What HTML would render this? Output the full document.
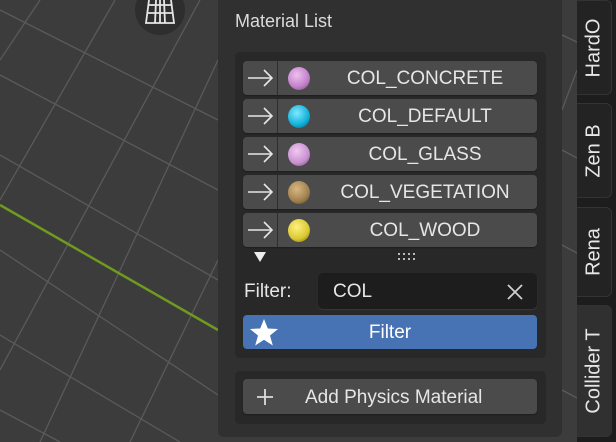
<!DOCTYPE html>
<html><head><style>
*{margin:0;padding:0;box-sizing:border-box}
body{width:616px;height:442px;overflow:hidden;background:#3c3c3c;font-family:"Liberation Sans",sans-serif;position:relative;color:#e6e6e6}
.abs{position:absolute}
.panel{left:218px;top:0;width:344px;height:437px;background:#303030;border-radius:0 0 6px 6px}
.box{left:235px;width:311px;background:#282828;border-radius:5px}
.row{left:243px;width:294px;height:34px;background:#4b4b4b;border-radius:4px;box-shadow:0 1px 1px #1e1e1e}
.row .arr{position:absolute;left:0;top:0;width:35px;height:34px;border-right:1px solid #2d2d2d}
.row .ball{position:absolute;left:45px;top:6px;width:22px;height:23px;border-radius:50%}
.row .t{position:absolute;left:70px;right:0;top:1px;line-height:34px;text-align:center;font-size:19px;color:#e6e6e6}
.tab{left:577px;width:35px;background:#232323;border-radius:0 6px 6px 0;border:1px solid #333;border-left:none;overflow:hidden}
.tab span{position:absolute;left:50%;top:50%;transform:translate(-50%,-50%) rotate(-90deg);font-size:20px;white-space:nowrap;color:#e6e6e6}
</style></head><body>
<svg class="abs" style="left:0;top:0" width="616" height="442">
<g stroke="#5a5a5a" stroke-width="1.3" fill="none">
<line x1="0" y1="10" x2="218" y2="120"/>
<line x1="0" y1="75" x2="218" y2="190"/>
<line x1="0" y1="155" x2="218" y2="280"/>
<line x1="0" y1="250" x2="218" y2="395"/>
<line x1="0" y1="335" x2="180" y2="442"/>
<line x1="0" y1="410" x2="60" y2="442"/>
<line x1="40" y1="0" x2="0" y2="60"/>
<line x1="115" y1="0" x2="0" y2="200"/>
<line x1="200" y1="0" x2="0" y2="370"/>
<line x1="218" y1="60" x2="40" y2="442"/>
<line x1="218" y1="260" x2="130" y2="442"/>
<line x1="562" y1="35" x2="577" y2="42"/>
<line x1="562" y1="150" x2="577" y2="158"/>
<line x1="562" y1="245" x2="577" y2="253"/>
<line x1="562" y1="390" x2="577" y2="398"/>
<line x1="577" y1="70" x2="562" y2="110"/>
</g>
<line x1="0" y1="205" x2="218" y2="330" stroke="#6f9a1f" stroke-width="2.5"/>
<circle cx="160" cy="10" r="25" fill="#2e2e2e"/>
<g stroke="#e6e6e6" stroke-width="1.8" fill="none"><path d="M149 0 L146 23 H174 L171 0 M147.5 13 H172.5 M148.5 5 H171.5 M156 0 L155 23 M160 0 V23 M164 0 L165 23"/></g>
</svg>
<div class="abs" style="left:577px;top:0;width:39px;height:442px;background:#1d1d1d"></div>
<div class="abs tab" style="top:0;height:95px"><span>HardO</span></div>
<div class="abs tab" style="top:103px;height:95px"><span>Zen B</span></div>
<div class="abs tab" style="top:207px;height:90px"><span>Rena</span></div>
<div class="abs tab" style="top:305px;height:132px;background:#303030"><span>Collider T</span></div>
<div class="abs panel"></div>
<div class="abs" style="left:235px;top:11px;font-size:18px;color:#dcdcdc">Material List</div>
<div class="abs box" style="top:52px;height:306px"></div>
<div class="abs box" style="top:371px;height:53px"></div>
<svg width="0" height="0" style="position:absolute"><defs><symbol id="ar" viewBox="0 0 35 34"><path d="M5 17 H29 M21 9 L29 17 L21 25" stroke="#e6e6e6" stroke-width="1.6" fill="none"/></symbol></defs></svg>
<div class="abs row" style="top:61px"><div class="arr"><svg width="35" height="34"><use href="#ar"/></svg></div><div class="ball" style="background:radial-gradient(circle at 40% 35%,#f0c0f0,#c080c8 60%,#704070)"></div><div class="t">COL_CONCRETE</div></div>
<div class="abs row" style="top:99px"><div class="arr"><svg width="35" height="34"><use href="#ar"/></svg></div><div class="ball" style="background:radial-gradient(circle at 40% 35%,#80e8ff,#10b0d8 60%,#0a5070)"></div><div class="t">COL_DEFAULT</div></div>
<div class="abs row" style="top:137px"><div class="arr"><svg width="35" height="34"><use href="#ar"/></svg></div><div class="ball" style="background:radial-gradient(circle at 40% 35%,#f0c8f0,#c890d0 60%,#704078)"></div><div class="t">COL_GLASS</div></div>
<div class="abs row" style="top:175px"><div class="arr"><svg width="35" height="34"><use href="#ar"/></svg></div><div class="ball" style="background:radial-gradient(circle at 40% 35%,#d8b880,#a08050 60%,#504020)"></div><div class="t">COL_VEGETATION</div></div>
<div class="abs row" style="top:213px"><div class="arr"><svg width="35" height="34"><use href="#ar"/></svg></div><div class="ball" style="background:radial-gradient(circle at 40% 35%,#fff080,#d8c830 60%,#706010)"></div><div class="t">COL_WOOD</div></div>
<div class="abs" style="left:254px;top:252px;width:0;height:0;border-left:6px solid transparent;border-right:6px solid transparent;border-top:10px solid #eee"></div>
<svg class="abs" style="left:398px;top:252px" width="22" height="10"><g fill="#bbb"><rect x="0" y="1" width="2" height="2"/><rect x="5" y="1" width="2" height="2"/><rect x="10" y="1" width="2" height="2"/><rect x="15" y="1" width="2" height="2"/><rect x="0" y="6" width="2" height="2"/><rect x="5" y="6" width="2" height="2"/><rect x="10" y="6" width="2" height="2"/><rect x="15" y="6" width="2" height="2"/></g></svg>
<div class="abs" style="left:244px;top:281px;font-size:19px">Filter:</div>
<div class="abs" style="left:318px;top:273px;width:219px;height:36px;background:#1d1d1d;border-radius:5px;box-shadow:0 1px 1px #3a3a3a"></div>
<div class="abs" style="left:333px;top:281px;font-size:19px">COL</div>
<svg class="abs" style="left:505px;top:282px" width="20" height="20"><path d="M3 3 L17 17 M17 3 L3 17" stroke="#cfcfcf" stroke-width="1.8"/></svg>
<div class="abs" style="left:243px;top:315px;width:294px;height:34px;background:#4772b3;border-radius:4px"></div>
<svg class="abs" style="left:248px;top:317px" width="32" height="30"><polygon points="16,2 19.8,11.5 30,12 22,18.5 24.8,28.5 16,22.8 7.2,28.5 10,18.5 2,12 12.2,11.5" fill="#fff"/></svg>
<div class="abs" style="left:243px;top:316px;width:294px;line-height:34px;text-align:center;font-size:19px;color:#fff">Filter</div>
<div class="abs row" style="top:379px;height:35px"><svg class="abs" style="left:12px;top:8px" width="20" height="20"><path d="M10 2 V18 M2 10 H18" stroke="#ddd" stroke-width="1.8"/></svg><div class="abs" style="left:62px;top:1px;line-height:35px;font-size:19px">Add Physics Material</div></div>
</body></html>
